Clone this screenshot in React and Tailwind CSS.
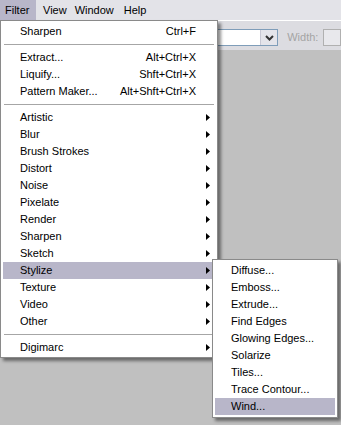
import React from "react";

const mainItems = [
  { label: "Sharpen", shortcut: "Ctrl+F" },
  { sep: true },
  { label: "Extract...", shortcut: "Alt+Ctrl+X" },
  { label: "Liquify...", shortcut: "Shft+Ctrl+X" },
  { label: "Pattern Maker...", shortcut: "Alt+Shft+Ctrl+X" },
  { sep: true },
  { label: "Artistic", sub: true },
  { label: "Blur", sub: true },
  { label: "Brush Strokes", sub: true },
  { label: "Distort", sub: true },
  { label: "Noise", sub: true },
  { label: "Pixelate", sub: true },
  { label: "Render", sub: true },
  { label: "Sharpen", sub: true },
  { label: "Sketch", sub: true },
  { label: "Stylize", sub: true, active: true },
  { label: "Texture", sub: true },
  { label: "Video", sub: true },
  { label: "Other", sub: true },
  { sep: true },
  { label: "Digimarc", sub: true },
];

const stylizeItems = [
  "Diffuse...",
  "Emboss...",
  "Extrude...",
  "Find Edges",
  "Glowing Edges...",
  "Solarize",
  "Tiles...",
  "Trace Contour...",
  "Wind...",
];

function Arrow() {
  return (
    <svg width="4" height="7" viewBox="0 0 4 7" className="block">
      <polygon points="0,0 4,3.5 0,7" fill="#000" />
    </svg>
  );
}

function MenuRow({ item }) {
  if (item.sep) {
    return (
      <div className="h-[9px] flex items-center px-[1px]">
        <div className="w-full h-[1px] bg-[#a6a6a6]" />
      </div>
    );
  }
  return (
    <div
      className={`h-[17px] flex items-center pl-[17px] pr-[5px] ${item.active ? "bg-[#b8b6c9]" : ""}`}
    >
      <span>{item.label}</span>
      {item.shortcut && <span className="ml-auto mr-[14px]">{item.shortcut}</span>}
      {item.sub && (
        <span className="ml-auto">
          <Arrow />
        </span>
      )}
    </div>
  );
}

export default function App() {
  return (
    <div className="w-[341px] h-[425px] bg-[#c0c0c0] relative overflow-hidden text-[11px] leading-none text-black font-['Liberation_Sans',Arial,sans-serif]">
      {/* menu bar */}
      <div className="h-[20px] bg-[#e3e3e8] flex items-stretch">
        <div className="w-[36px] bg-[#b8b6c9] flex items-center pl-[5px]">Filter</div>
        <div className="flex items-center pl-[7px]">View</div>
        <div className="flex items-center pl-[8px]">Window</div>
        <div className="flex items-center pl-[10px]">Help</div>
      </div>

      {/* options strip */}
      <div className="h-[30px] bg-[#dcdce1] border-t border-white flex items-start pt-[8px]">
        <div className="ml-[205px] w-[84px] h-[17px] border border-[#7f9db9] bg-white flex justify-end">
          <div className="w-[17px] h-full bg-[#e4e4ea] border-l border-[#c8c8d4] flex items-center justify-center">
            <svg width="9" height="6" viewBox="0 0 9 6">
              <path d="M1 1 L4.5 4.5 L8 1" stroke="#333" strokeWidth="2" fill="none" />
            </svg>
          </div>
        </div>
        <div className="ml-[9px] h-[17px] flex items-center text-[#a4a4a4]">Width:</div>
        <div className="ml-[5px] w-[20px] h-[17px] border border-[#b0b0b0] bg-[#e8e8ec]" />
      </div>

      {/* Filter menu */}
      <div className="absolute left-0 top-[20px] w-[218px] bg-white border border-[#8a8a8a] pt-[2px] pb-[1px] px-[2px] shadow-[3px_3px_3px_rgba(0,0,0,0.45)]">
        {mainItems.map((item, i) => (
          <MenuRow key={i} item={item} />
        ))}
      </div>

      {/* Stylize submenu */}
      <div className="absolute left-[212px] top-[259px] w-[126px] bg-white border border-[#8a8a8a] pt-[2px] pb-[2px] px-[2px] shadow-[3px_3px_3px_rgba(0,0,0,0.45)]">
        {stylizeItems.map((label, i) => (
          <div
            key={i}
            className={`h-[17px] flex items-center pl-[16px] ${i === stylizeItems.length - 1 ? "bg-[#b8b6c9]" : ""}`}
          >
            {label}
          </div>
        ))}
      </div>
    </div>
  );
}
